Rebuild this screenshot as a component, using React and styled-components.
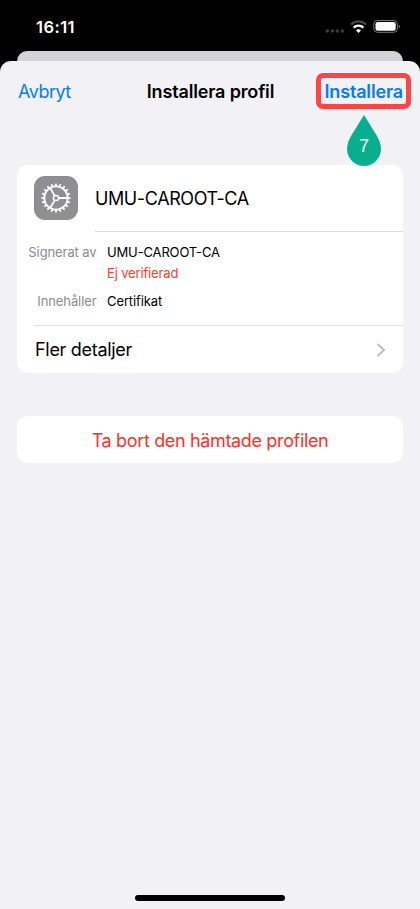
import React from 'react';
import styled, { createGlobalStyle } from 'styled-components';

const GlobalStyle = createGlobalStyle`
  * {
    box-sizing: border-box;
  }

  body {
    margin: 0;
    background: #000;
    font-family: Inter, "Liberation Sans", sans-serif;
    font-size: 18px;
  }

  button {
    margin: 0;
    padding: 0;
    border: 0;
    background: none;
    font: inherit;
    cursor: pointer;
  }
`;

const Screen = styled.div`
  display: flex;
  flex-direction: column;
  height: 909px;
  background: #000;
  overflow: hidden;
`;

const StatusBar = styled.div`
  display: flex;
  justify-content: space-between;
  height: 51px;
  padding: 18px 20px 0 36px;
`;

const Time = styled.div`
  color: #fff;
  font-size: 16.5px;
  font-weight: 600;
  line-height: 19px;
  letter-spacing: 0.45px;
`;

const BackSheet = styled.div`
  height: 21px;
  margin: 0 17px -11px;
  border-radius: 10px 10px 0 0;
  background: #d4d3d9;
`;

const Sheet = styled.div`
  position: relative;
  display: flex;
  flex-direction: column;
  flex: 1;
  padding: 0 17px 8.5px;
  border-radius: 11px 11px 0 0;
  background: #f2f1f6;
`;

const NavBar = styled.div`
  display: grid;
  grid-template-columns: 1fr auto 1fr;
  align-items: center;
  height: 60px;
  margin-bottom: 44px;
  padding-left: 1px;
`;

const NavButton = styled.button`
  justify-self: ${props => (props.$primary ? 'end' : 'start')};
  color: #067bff;
  font-weight: ${props => (props.$primary ? 600 : 400)};
  letter-spacing: ${props => props.$spacing};
`;

const Title = styled.div`
  font-weight: 600;
  letter-spacing: -0.15px;
`;

const Highlight = styled.div`
  position: absolute;
  top: 12px;
  right: 9px;
  width: 95px;
  height: 36px;
  border: 5px solid #ff4547;
  border-radius: 7px;
  pointer-events: none;
`;

const Step = styled.div`
  position: absolute;
  top: 54px;
  right: 39px;
  width: 34px;
  height: 51px;
  padding-top: 20px;
  color: #fff;
  font-family: "Liberation Sans", sans-serif;
  font-size: 18px;
  line-height: 22px;
  text-align: center;

  svg {
    position: absolute;
    top: 0;
    left: 0;
  }

  span {
    position: relative;
  }
`;

const Card = styled.div`
  margin-bottom: 43px;
  border-radius: 11px;
  background: #fff;
`;

const Profile = styled.div`
  display: flex;
  height: 67px;
  padding-left: 17px;
`;

const AppIcon = styled.div`
  width: 44px;
  height: 44px;
  margin: 11px 17px 0 0;
  border-radius: 11px;
  background: #8e8e93;
`;

const ProfileName = styled.div`
  flex: 1;
  line-height: 68px;
  letter-spacing: -0.4px;
  border-bottom: 1px solid #dededf;
`;

const Details = styled.div`
  display: grid;
  grid-template-columns: 79.5px 1fr;
  column-gap: 10.5px;
  row-gap: 8px;
  height: 93px;
  padding-top: 10px;
  font-size: 13px;
  line-height: 20px;
  align-content: start;
`;

const Label = styled.div`
  color: #8b8b8f;
  text-align: right;
  letter-spacing: ${props => props.$spacing};
`;

const Value = styled.div`
  padding-top: ${props => (props.$warning ? '1px' : '0')};
  color: ${props => (props.$warning ? '#ff3b30' : '#000')};
  letter-spacing: ${props => props.$spacing};
`;

const MoreRow = styled.div`
  display: flex;
  align-items: center;
  justify-content: space-between;
  height: 48px;
  margin-left: 17px;
  padding: 0 17px 0 1px;
  border-top: 1px solid #dededf;
  letter-spacing: -0.3px;
`;

const RemoveButton = styled.button`
  width: 100%;
  height: 47px;
  padding-top: 1px;
  color: #ff3028;
  letter-spacing: -0.35px;
`;

const HomeIndicator = styled.div`
  width: 150px;
  height: 5.5px;
  margin: auto auto 0;
  border-radius: 3px;
  background: #000;
`;

const StatusIcons = () => (
  <svg width="76" height="18" viewBox="324 18 76 18">
    <g fill="#3e3e3e">
      <circle cx="327.3" cy="31" r="1.7" />
      <circle cx="332.3" cy="31" r="1.7" />
      <circle cx="337.3" cy="31" r="1.7" />
      <circle cx="342.3" cy="31" r="1.7" />
    </g>
    <g fill="none" strokeWidth="2.3">
      <path d="M351 24.5a10.7 10.7 0 0 1 15 0" stroke="#464646" />
      <path d="M353.6 27.6a7 7 0 0 1 9.8 0" stroke="#fff" />
    </g>
    <path d="M356 30.3a3.8 3.8 0 0 1 5 0L358.5 32.9z" fill="#fff" />
    <rect x="373.8" y="20.5" width="23.6" height="11.8" rx="3.6" fill="none" stroke="#777" />
    <rect x="375.5" y="22" width="20.2" height="8.8" rx="2.2" fill="#fff" />
    <path d="M398.6 24.4q1.3.5 1.3 2t-1.3 2z" fill="#777" />
  </svg>
);

const teeth = Array.from({ length: 20 }, (_, i) => i * 18);

const Gear = () => (
  <svg width="44" height="44" viewBox="-22 -22 44 44">
    <g fill="none" stroke="#fff" strokeWidth="1.8">
      <circle r="11.6" />
      <circle r="2.6" strokeWidth="1.5" />
      <path d="M2.8 0H11.5M-1.4 -2.4L-5.8 -10M-1.4 2.4L-5.8 10" />
    </g>
    {teeth.map(angle => (
      <path
        key={angle}
        d="M12 -1.25L14.6 -.7V.7L12 1.25z"
        fill="#fff"
        transform={`rotate(${angle})`}
      />
    ))}
  </svg>
);

export default () => (
  <>
    <GlobalStyle />
    <Screen>
      <StatusBar>
        <Time>16:11</Time>
        <StatusIcons />
      </StatusBar>
      <BackSheet />
      <Sheet>
        <NavBar>
          <NavButton $spacing="-0.5px">Avbryt</NavButton>
          <Title>Installera profil</Title>
          <NavButton $primary $spacing="-0.15px">Installera</NavButton>
        </NavBar>
        <Card>
          <Profile>
            <AppIcon><Gear /></AppIcon>
            <ProfileName>UMU-CAROOT-CA</ProfileName>
          </Profile>
          <Details>
            <Label $spacing="-0.1px">Signerat av</Label>
            <div>
              <Value $spacing="-0.15px">UMU-CAROOT-CA</Value>
              <Value $warning $spacing="-0.15px">Ej verifierad</Value>
            </div>
            <Label $spacing="-0.1px">Innehåller</Label>
            <Value $spacing="-0.1px">Certifikat</Value>
          </Details>
          <MoreRow>
            Fler detaljer
            <svg width="10" height="14" viewBox="0 0 10 14" fill="none" stroke="#bcbcbf" strokeWidth="2">
              <path d="M1.5 1L8 7L1.5 13" />
            </svg>
          </MoreRow>
        </Card>
        <Card>
          <RemoveButton>Ta bort den hämtade profilen</RemoveButton>
        </Card>
        <HomeIndicator />
        <Highlight />
        <Step>
          <svg width="34" height="51" viewBox="0 0 34 51">
            <path d="M17 0L28.5 18.5C31.5 23.5 34 28.5 34 34A17 17 0 0 1 0 34C0 28.5 2.5 23.5 5.5 18.5z" fill="#08ae8d" />
          </svg>
          <span>7</span>
        </Step>
      </Sheet>
    </Screen>
  </>
);
